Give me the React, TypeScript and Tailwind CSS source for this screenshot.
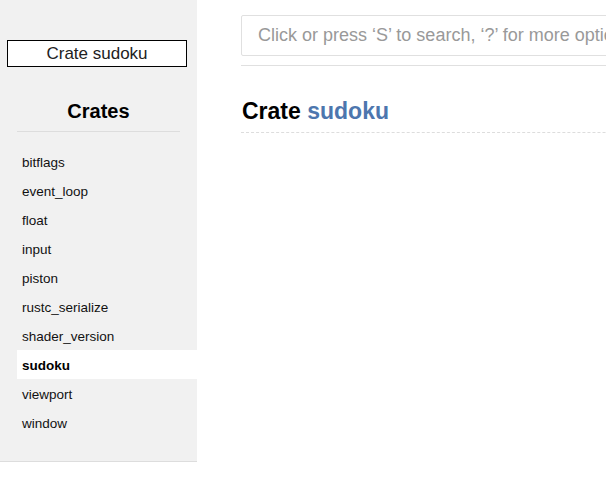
import React from 'react';

const crates = [
  'bitflags',
  'event_loop',
  'float',
  'input',
  'piston',
  'rustc_serialize',
  'shader_version',
  'sudoku',
  'viewport',
  'window',
];

const Sidebar: React.FC<{ current: string }> = ({ current }) => (
  <nav className="w-[197px] shrink-0 self-start bg-[#f1f1f1] border-b border-[#dddddd] pt-[40px] pb-[24px]">
    <div className="ml-[7px] w-[180px] h-[27px] border border-black bg-white flex items-center justify-center text-[17px] text-[#222]">
      Crate sudoku
    </div>
    <h2 className="mt-[32px] mx-[17px] pb-[8px] border-b border-[#dddddd] text-center text-[20px] leading-[24px] font-bold text-black">
      Crates
    </h2>
    <ul className="mt-[15px]">
      {crates.map((name) => (
        <li
          key={name}
          className={`ml-[17px] pl-[5px] pt-[4px] h-[29px] flex items-center text-[13.5px] ${
            name === current ? 'bg-white font-bold text-black' : 'text-[#111]'
          }`}
        >
          {name}
        </li>
      ))}
    </ul>
  </nav>
);

export default function App() {
  return (
    <div
      className="w-[606px] h-[498px] overflow-hidden bg-white flex"
      style={{ fontFamily: '"Liberation Sans", Arial, sans-serif' }}
    >
      <Sidebar current="sudoku" />
      <main className="ml-[44px] w-[480px] shrink-0 pt-[15px]">
        <div className="border-b border-[#e0e0e0] pb-[9px]">
          <input
            className="w-full h-[41px] border border-[#e0e0e0] rounded-[2px] px-[16px] text-[18px] outline-none placeholder:text-[#999]"
            placeholder="Click or press ‘S’ to search, ‘?’ for more options…"
            readOnly
          />
        </div>
        <h1 className="mt-[32px] pb-[7px] pl-[1px] border-b border-dashed border-[#dddddd] text-[23px] leading-[27px] font-bold text-black">
          Crate <span className="text-[#4d76ae]">sudoku</span>
        </h1>
      </main>
    </div>
  );
}
